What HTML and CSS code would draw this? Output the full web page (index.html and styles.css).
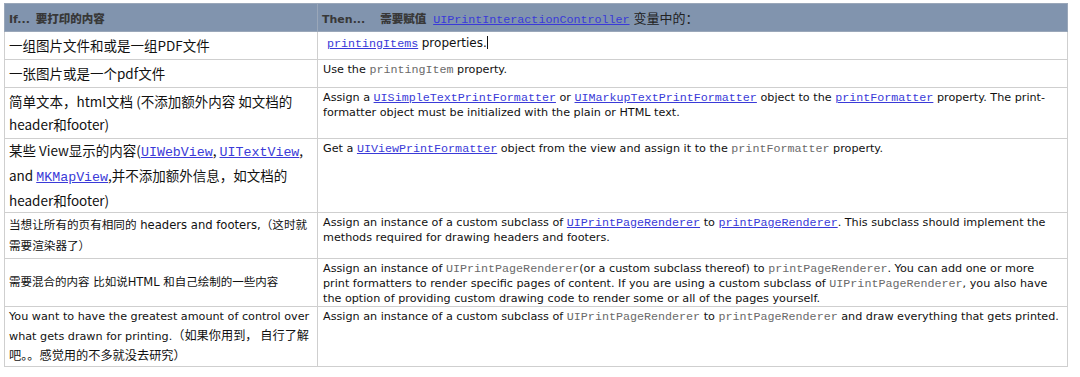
FILE: index.html
```html
<!DOCTYPE html>
<html lang="zh">
<head>
<meta charset="utf-8">
<title>Print content</title>
<link rel="stylesheet" href="styles.css">
</head>
<body>
<table class="grid">
  <tr class="r-head">
    <th class="c-left"><b>If...</b><b class="cjk gap-s">要打印的内容</b></th>
    <th class="c-right"><b>Then...</b><b class="cjk gap-l">需要赋值</b><a class="code head-link" href="#">UIPrintInteractionController</a><span class="cjk plain">变量中的：</span></th>
  </tr>
  <tr class="r1">
    <td class="c-left big">一组图片文件和或是一组PDF文件</td>
    <td class="c-right"><span class="indent"><a class="code" href="#">printingItems</a> <span class="bigtext">properties.</span><span class="caret"></span></span></td>
  </tr>
  <tr class="r2">
    <td class="c-left big">一张图片或是一个pdf文件</td>
    <td class="c-right">Use the <code class="code gray">printingItem</code> property.</td>
  </tr>
  <tr class="r3">
    <td class="c-left big">简单文本，html文档 (不添加额外内容 如文档的<br>header和footer)</td>
    <td class="c-right">Assign a <a class="code" href="#">UISimpleTextPrintFormatter</a> or <a class="code" href="#">UIMarkupTextPrintFormatter</a> object to the <a class="code" href="#">printFormatter</a> property. The print-<br>formatter object must be initialized with the plain or HTML text.</td>
  </tr>
  <tr class="r4">
    <td class="c-left big">某些 View显示的内容(<a class="code" href="#">UIWebView</a>, <a class="code" href="#">UITextView</a>,<br>and <a class="code" href="#">MKMapView</a>,并不添加额外信息，如文档的<br>header和footer)</td>
    <td class="c-right">Get a <a class="code" href="#">UIViewPrintFormatter</a> object from the view and assign it to the <code class="code gray">printFormatter</code> property.</td>
  </tr>
  <tr class="r5">
    <td class="c-left small">当想让所有的页有相同的 headers and footers,（这时就<br>需要渲染器了）</td>
    <td class="c-right">Assign an instance of a custom subclass of <a class="code" href="#">UIPrintPageRenderer</a> to <a class="code" href="#">printPageRenderer</a>. This subclass should implement the<br>methods required for drawing headers and footers.</td>
  </tr>
  <tr class="r6">
    <td class="c-left small mixed">需要混合的内容 比如说HTML 和自己绘制的一些内容</td>
    <td class="c-right">Assign an instance of <code class="code gray">UIPrintPageRenderer</code>(or a custom subclass thereof) to <code class="code gray">printPageRenderer</code>. You can add one or more<br>print formatters to render specific pages of content. If you are using a custom subclass of <code class="code gray">UIPrintPageRenderer</code>, you also have<br>the option of providing custom drawing code to render some or all of the pages yourself.</td>
  </tr>
  <tr class="r7">
    <td class="c-left small last">You want to have the greatest amount of control over<br>what gets drawn for printing.<span class="zh">（如果你用到， 自行了解</span><br><span class="zh">吧。。感觉用的不多就没去研究）</span></td>
    <td class="c-right">Assign an instance of a custom subclass of <code class="code gray">UIPrintPageRenderer</code> to <code class="code gray">printPageRenderer</code> and draw everything that gets printed.</td>
  </tr>
</table>
</body>
</html>
```
FILE: styles.css
```css
html, body {
  margin: 0;
  padding: 0;
  background: #ffffff;
}
body {
  padding: 3px 0 0 4px;
  font-family: "DejaVu Sans", "Noto Sans CJK SC", sans-serif;
  color: #111;
}
.grid {
  border-collapse: collapse;
  width: 1064px;
  table-layout: fixed;
  border: 1px solid #bdbdbd;
}
.grid th, .grid td {
  box-sizing: border-box;
  border: 1px solid #cfcfcf;
  padding: 0;
}
.c-left { width: 313px; }
.r-head { height: 28px; background: #8194ae; }
.r-head th {
  text-align: left;
  vertical-align: middle;
  font-size: 11px;
  color: #383838;
  font-weight: bold;
  padding: 0 2px 0 4px;
  border-color: #9aa7b9;
  white-space: nowrap;
}
.r-head .c-right { padding-left: 4px; }
.cjk { font-family: "Noto Sans CJK SC", sans-serif; font-size: 11.5px; }
.gap-s { margin-left: 6px; }
.gap-l { margin-left: 15px; margin-right: 7px; }
.head-link { font-size: 11.8px; font-weight: normal; margin-right: 4px; }
.plain { font-weight: normal; font-size: 13px; color: #222; }
.r1 { height: 28px; }
.r2 { height: 28px; }
.r3 { height: 51px; }
.r4 { height: 74px; }
.r5 { height: 46px; }
.r6 { height: 48px; }
.r7 { height: 60px; }

td.c-left {
  vertical-align: middle;
  padding: 0 2px 0 4px;
  font-family: "Noto Sans CJK SC", sans-serif;
  color: #111;
  white-space: nowrap;
}
td.big { font-size: 13.5px; line-height: 23px; }
td.big .code { font-size: 13.3px; }
td.small {
  font-size: 11.6px;
  line-height: 21px;
  font-family: "DejaVu Sans", "Noto Sans CJK SC", sans-serif;
}
td.mixed { font-size: 11.5px; }
td.last { line-height: 19px; font-size: 11.2px; }
td.last .zh { font-family: "Noto Sans CJK SC", sans-serif; font-size: 12.2px; }
td.c-right {
  vertical-align: top;
  padding: 3px 3px 0 5px;
  font-size: 11.2px;
  line-height: 13.8px;
}
.code {
  font-family: "Liberation Mono", monospace;
  font-size: 11.7px;
  color: #3a3ad8;
  text-decoration: underline;
}
.code.gray { color: #6a6a6a; text-decoration: none; }
.indent { display: inline-block; padding: 1px 0 0 4px; }
.bigtext { font-size: 12px; color: #111; }
.caret {
  display: inline-block;
  width: 1px;
  height: 13px;
  background: #111;
  vertical-align: -2px;
}
```
